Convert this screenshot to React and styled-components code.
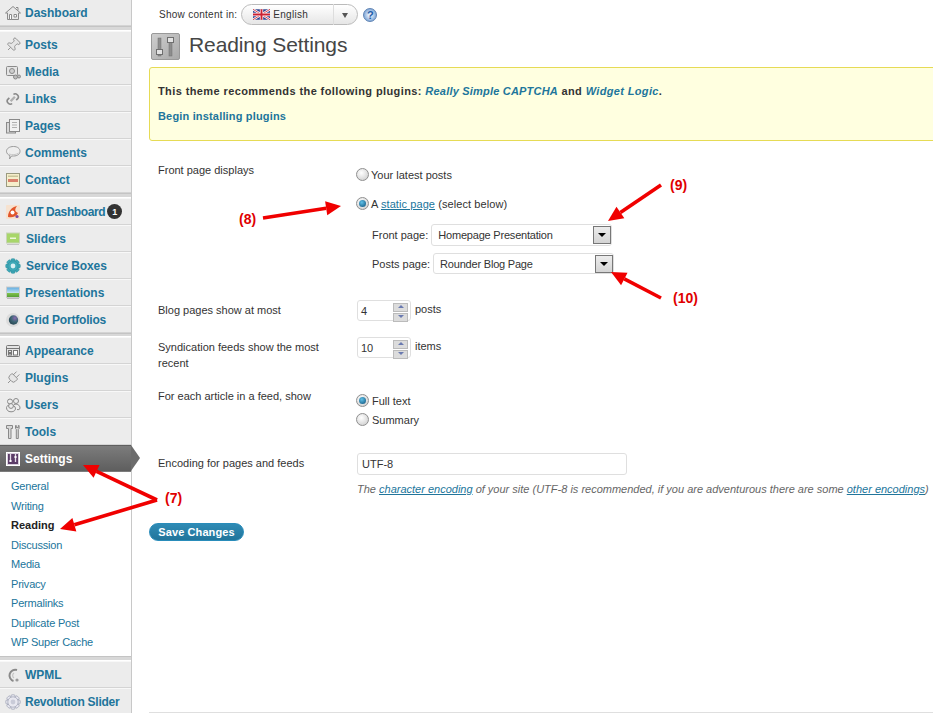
import React from 'react';
import styled, { createGlobalStyle } from 'styled-components';
import { Pin, Plug } from 'lucide-react';

const GlobalStyle = createGlobalStyle`
  html, body { margin: 0; padding: 0; background: #fff; }
  body { font-family: "Liberation Sans", Arial, sans-serif; font-size: 11px; color: #333; }
`;

const HomeIcon = () => (
  <svg width="16" height="16" viewBox="0 0 16 16" fill="#e8e8e8" stroke="#8a8a8a">
    <path d="M0.5 8 L8 1.5 L15.5 8 L13.5 8 V14.5 H2.5 V8Z" />
    <path d="M4.5 9.5h2v5h-2zM9 9.5h2.5v2.5H9z" fill="#fff" />
    <path d="M11 2.5h2v3" fill="none" />
  </svg>
);

const MediaIcon = () => (
  <svg width="16" height="16" viewBox="0 0 16 16" fill="#e4e4e4" stroke="#8a8a8a">
    <rect x="1.5" y="2.5" width="11" height="9" rx="1" />
    <circle cx="7" cy="7" r="2.5" fill="#cfcfcf" />
    <circle cx="10.5" cy="13" r="2" fill="#bdbdbd" />
    <circle cx="14" cy="12.5" r="1.5" fill="#bdbdbd" />
  </svg>
);

const LinksIcon = () => (
  <svg width="17" height="16" viewBox="0 0 17 16" fill="none" stroke="#8a8a8a" strokeWidth="1.8">
    <path d="M9 3.2 a2.6 2.6 0 0 1 3.7 0 l0.8 0.8 a2.6 2.6 0 0 1 0 3.7 l-1.6 1.6" />
    <path d="M7.5 12.8 a2.6 2.6 0 0 1 -3.7 0 l-0.8 -0.8 a2.6 2.6 0 0 1 0 -3.7 l1.6 -1.6" />
    <path d="M6 10.5 L10.5 5.5" strokeWidth="2.4" stroke="#b0b0b0" />
  </svg>
);

const PagesIcon = () => (
  <svg width="16" height="16" viewBox="0 0 16 16" fill="#ececec" stroke="#8a8a8a">
    <rect x="1.5" y="4.5" width="9" height="10.5" fill="#d8d8d8" />
    <rect x="4.5" y="1.5" width="10" height="12" fill="#f2f2f2" />
    <path d="M7 4.5h5M7 7h5M7 9.5h5" stroke="#b0b0b0" />
  </svg>
);

const CommentsIcon = () => (
  <svg width="16" height="16" viewBox="0 0 16 16" fill="#eeeeee" stroke="#9a9a9a">
    <path d="M8.5 1.5 C12.5 1.5 15 3.5 15 6.3 C15 9 12.5 11 8.5 11 L6.5 11 L4.5 14 L5 10.6 C3 9.8 1.5 8.3 1.5 6.3 C1.5 3.5 4.5 1.5 8.5 1.5Z" />
    <path d="M4 9 C7 10 11 10 13.5 8" fill="none" stroke="#c9c9c9" />
  </svg>
);

const ContactIcon = () => (
  <svg width="16" height="16" viewBox="0 0 16 16">
    <rect x="1.5" y="1.5" width="13" height="13" fill="#f5eecb" stroke="#9a9a80" />
    <rect x="3" y="7" width="10" height="3" fill="#d9806c" />
    <rect x="3" y="3.5" width="10" height="1.5" fill="#c9c49a" />
  </svg>
);

const AitIcon = () => (
  <svg width="16" height="16" viewBox="0 0 16 16">
    <rect x="1" y="1" width="14" height="14" rx="1" fill="#f7e2cf" />
    <path d="M3 13 C3 7 7 3 12 2 C10 5 9 7 13 9 C11 13 7 14 3 13Z" fill="#e2562a" />
    <circle cx="7.5" cy="8.5" r="2" fill="#fff" />
    <circle cx="12" cy="12.5" r="1.6" fill="#7a4aa0" />
  </svg>
);

const SlidersIcon = () => (
  <svg width="16" height="16" viewBox="0 0 16 16">
    <rect x="1.5" y="2" width="13" height="10" fill="#a8d66a" stroke="#c8d4b8" />
    <rect x="5" y="6.5" width="6" height="1.5" fill="#eef7dc" />
    <rect x="2" y="13" width="12" height="1" fill="#c4c4c4" />
  </svg>
);

const GearIcon = ({ fill, stroke, hole }) => (
  <svg width="16" height="16" viewBox="0 0 16 16">
    <g fill={fill} stroke={stroke} strokeWidth="0.6">
      {[0, 45, 90, 135].map(angle => (
        <rect key={angle} x="6" y="0.8" width="4" height="14.4" rx="1" transform={`rotate(${angle} 8 8)`} />
      ))}
      <circle cx="8" cy="8" r="5.2" />
    </g>
    <circle cx="8" cy="8" r="2.4" fill={hole} />
  </svg>
);

const PresentationIcon = () => (
  <svg width="16" height="16" viewBox="0 0 16 16">
    <defs>
      <linearGradient id="sky" x1="0" y1="0" x2="0" y2="1">
        <stop offset="0" stopColor="#5aa9e0" />
        <stop offset="0.55" stopColor="#bfe0f0" />
        <stop offset="0.6" stopColor="#7fc04a" />
        <stop offset="1" stopColor="#4f9a35" />
      </linearGradient>
    </defs>
    <rect x="1.5" y="2" width="13" height="10.5" fill="url(#sky)" stroke="#ccc" />
    <rect x="2" y="13" width="12" height="1" fill="#bbb" />
  </svg>
);

const GridIcon = () => (
  <svg width="16" height="16" viewBox="0 0 16 16">
    <defs>
      <radialGradient id="ball" cx="0.65" cy="0.3" r="0.8">
        <stop offset="0" stopColor="#8a6bb0" />
        <stop offset="0.5" stopColor="#3d6674" />
        <stop offset="1" stopColor="#24404c" />
      </radialGradient>
    </defs>
    <circle cx="8" cy="8" r="7" fill="#dcdcdc" />
    <circle cx="8.5" cy="8" r="4.7" fill="url(#ball)" />
  </svg>
);

const AppearanceIcon = () => (
  <svg width="16" height="16" viewBox="0 0 16 16" fill="none" stroke="#777">
    <rect x="1.5" y="2.5" width="13" height="11" rx="1" fill="#e4e4e4" />
    <path d="M1.5 5.5h13" />
    <rect x="3.5" y="7.5" width="3" height="2" />
    <rect x="3.5" y="10.5" width="3" height="1.5" />
    <rect x="8.5" y="7.5" width="4" height="4.5" fill="#fff" />
  </svg>
);

const UsersIcon = () => (
  <svg width="16" height="16" viewBox="0 0 16 16" fill="#ededed" stroke="#8a8a8a">
    <circle cx="5" cy="4.5" r="2.5" />
    <circle cx="11" cy="4" r="2.5" />
    <path d="M9 7.5 C12 6.5 15 8 15 11 C15 12.5 13.5 13 12 12.5" />
    <path d="M1.5 10.5 C1.5 7.5 8.5 7 10 10 C11.5 13 9 14.8 6 14.8 C3 14.8 1.5 13 1.5 10.5Z" />
    <circle cx="6" cy="9" r="2.4" />
  </svg>
);

const ToolsIcon = () => (
  <svg width="16" height="16" viewBox="0 0 16 16" fill="#d8d8d8" stroke="#888">
    <path d="M1.5 1.5h6v3H6v10H3.5v-10h-2z" />
    <path d="M10.5 1.5 v3 l0.8 1 v9 h2 v-9 l0.8 -1 v-3 l-0.8 0 v2 h-2 v-2z" />
  </svg>
);

const SettingsIcon = () => (
  <svg width="14" height="14" viewBox="0 0 14 14">
    <rect x="0.5" y="0.5" width="13" height="13" fill="#d8d0dc" stroke="#fff" />
    <rect x="2" y="2" width="10" height="10" fill="#5c3d68" />
    <path d="M4.5 2v8M9.5 2v8" stroke="#e6dcea" strokeWidth="1.3" />
    <rect x="3.5" y="8" width="2" height="2" fill="#fff" />
    <rect x="8.5" y="4" width="2" height="2" fill="#fff" />
  </svg>
);

const WpmlIcon = () => (
  <svg width="16" height="16" viewBox="0 0 16 16" fill="none">
    <path d="M12 3 A5.6 5.6 0 1 0 8.5 14" stroke="#8a8a8a" strokeWidth="2" />
    <circle cx="12" cy="13" r="1.6" fill="#9a9a9a" />
    <path d="M9 6a3 3 0 0 0 0 5" stroke="#c4c4c4" strokeWidth="1.2" />
  </svg>
);

const TiltedPin = styled(Pin)`
  transform: rotate(45deg);
`;

const TiltedPlug = styled(Plug)`
  transform: rotate(45deg);
`;

const grey = { size: 16, strokeWidth: 1.3, color: '#8a8a8a', fill: '#e6e6e6' };

const groups = [
  [{ name: 'Dashboard', icon: <HomeIcon /> }],
  [
    { name: 'Posts', icon: <TiltedPin {...grey} /> },
    { name: 'Media', icon: <MediaIcon /> },
    { name: 'Links', icon: <LinksIcon /> },
    { name: 'Pages', icon: <PagesIcon /> },
    { name: 'Comments', icon: <CommentsIcon /> },
    { name: 'Contact', icon: <ContactIcon /> },
  ],
  [
    { name: 'AIT Dashboard', icon: <AitIcon />, badge: 1, squeeze: 0.4 },
    { name: 'Sliders', icon: <SlidersIcon />, nudge: true },
    { name: 'Service Boxes', icon: <GearIcon fill="#3fa9b8" stroke="#2b8f9e" hole="#d9f0f3" />, nudge: true, squeeze: 0.1 },
    { name: 'Presentations', icon: <PresentationIcon /> },
    { name: 'Grid Portfolios', icon: <GridIcon />, squeeze: 0.2 },
  ],
  [
    { name: 'Appearance', icon: <AppearanceIcon /> },
    { name: 'Plugins', icon: <TiltedPlug {...grey} /> },
    { name: 'Users', icon: <UsersIcon /> },
    { name: 'Tools', icon: <ToolsIcon /> },
    { name: 'Settings', icon: <SettingsIcon />, current: true },
  ],
];

const subItems = ['General', 'Writing', 'Reading', 'Discussion', 'Media', 'Privacy', 'Permalinks', 'Duplicate Post', 'WP Super Cache'];

const lastGroup = [
  { name: 'WPML', icon: <WpmlIcon /> },
  { name: 'Revolution Slider', icon: <GearIcon fill="#e8e8f0" stroke="#8f93a8" hole="#c9cbd8" />, squeeze: 0.25 },
];

const MenuList = ({ items }) => (
  <Group>
    {items.map(item => (
      <MenuRow key={item.name} $current={item.current}>
        <IconSlot>{item.icon}</IconSlot>
        <MenuLabel $current={item.current} $nudge={item.nudge} $squeeze={item.squeeze}>{item.name}</MenuLabel>
        {item.badge && <Badge>{item.badge}</Badge>}
      </MenuRow>
    ))}
  </Group>
);

const UkFlag = () => (
  <svg width="17" height="11" viewBox="0 0 18 11">
    <rect width="18" height="11" fill="#2a3f8f" />
    <path d="M0 0L18 11M18 0L0 11" stroke="#fff" strokeWidth="2.4" />
    <path d="M0 0L18 11M18 0L0 11" stroke="#cc2233" strokeWidth="0.9" />
    <path d="M9 0V11M0 5.5H18" stroke="#fff" strokeWidth="3.6" />
    <path d="M9 0V11M0 5.5H18" stroke="#cc2233" strokeWidth="2" />
  </svg>
);

const HeadingIcon = () => (
  <svg width="29" height="27" viewBox="0 0 29 27">
    <defs>
      <linearGradient id="tile" x1="0" y1="0" x2="1" y2="1">
        <stop offset="0" stopColor="#cfcfcf" />
        <stop offset="1" stopColor="#a8a8a8" />
      </linearGradient>
    </defs>
    <rect x="0.5" y="0.5" width="28" height="26" rx="1.5" fill="url(#tile)" stroke="#999" />
    <rect x="7" y="5" width="3" height="18" fill="#8d8d8d" stroke="#6f6f6f" strokeWidth="0.5" />
    <rect x="18" y="5" width="3" height="18" fill="#8d8d8d" stroke="#6f6f6f" strokeWidth="0.5" />
    <rect x="5.5" y="16.5" width="6" height="5" fill="#e2e2e2" stroke="#6f6f6f" />
    <rect x="16.5" y="4.5" width="6" height="5" fill="#e2e2e2" stroke="#6f6f6f" />
  </svg>
);

const Radio = ({ checked }) => <RadioDot $checked={checked} />;

const Spinner = ({ value }) => (
  <SpinBox>
    {value}
    <SpinButtons>
      <SpinHalf><SpinUp /></SpinHalf>
      <SpinHalf><SpinDown /></SpinHalf>
    </SpinButtons>
  </SpinBox>
);

const Arrow = ({ x1, y1, x2, y2 }) => {
  const angle = Math.atan2(y2 - y1, x2 - x1);
  const len = 15;
  const wing = 7;
  const bx = x2 - Math.cos(angle) * len;
  const by = y2 - Math.sin(angle) * len;
  const nx = -Math.sin(angle) * wing;
  const ny = Math.cos(angle) * wing;
  return (
    <g>
      <line x1={x1} y1={y1} x2={bx} y2={by} stroke="#f00000" strokeWidth="3.6" />
      <polygon points={`${x2},${y2} ${bx + nx},${by + ny} ${bx - nx},${by - ny}`} fill="#f00000" />
    </g>
  );
};

const App = () => (
  <Page>
    <GlobalStyle />
    <Sidebar>
      <MenuList items={groups[0]} />
      <Separator />
      <MenuList items={groups[1]} />
      <Separator />
      <MenuList items={groups[2]} />
      <Separator $thin />
      <MenuList items={groups[3]} />
      <SubMenu>
        {subItems.map(item => (
          <SubItem key={item} $active={item === 'Reading'}>{item}</SubItem>
        ))}
      </SubMenu>
      <Separator />
      <MenuList items={lastGroup} />
    </Sidebar>

    <Main>
      <LangBar>
        <LangPrompt>Show content in:</LangPrompt>
        <LangSelect>
          <UkFlag />
          <LangName>English</LangName>
          <LangCaret />
        </LangSelect>
        <HelpIcon>?</HelpIcon>
      </LangBar>

      <TitleRow>
        <HeadingIcon />
        <Title>Reading Settings</Title>
      </TitleRow>

      <Notice>
        <NoticeLine $spacing={0.4}>
          This theme recommends the following plugins: <NoticeLink $spacing={0.2}>Really Simple CAPTCHA</NoticeLink> and{' '}
          <NoticeLink $spacing={0.35}>Widget Logic</NoticeLink>.
        </NoticeLine>
        <NoticeLine $spacing={0.17}><InstallLink>Begin installing plugins</InstallLink></NoticeLine>
      </Notice>

      <FormRow $top={19}>
        <RowLabel>Front page displays</RowLabel>
        <FieldStack $pad={5}>
          <Choice $height={29}>
            <Radio />
            <span>Your latest posts</span>
          </Choice>
          <Choice $height={30}>
            <Radio checked />
            <StaticLine>A <TextLink>static page</TextLink> (select below)</StaticLine>
          </Choice>
          <PageSelect $indent={15} $height={22}>
            <SelectLabel>Front page:</SelectLabel>
            <SelectBox>Homepage Presentation<SelectButton /></SelectBox>
          </PageSelect>
          <PageSelect $indent={15} $height={21} $top={7}>
            <SelectLabel>Posts page:</SelectLabel>
            <SelectBox>Rounder Blog Page<SelectButton /></SelectBox>
          </PageSelect>
        </FieldStack>
      </FormRow>

      <FormRow $top={26}>
        <RowLabel>Blog pages show at most</RowLabel>
        <SpinLine>
          <Spinner value="4" />
          <span>posts</span>
        </SpinLine>
      </FormRow>

      <FormRow $top={16}>
        <RowLabel $tight>Syndication feeds show the most recent</RowLabel>
        <SpinLine>
          <Spinner value="10" />
          <span>items</span>
        </SpinLine>
      </FormRow>

      <FormRow $top={15}>
        <RowLabel>For each article in a feed, show</RowLabel>
        <FieldStack $pad={5}>
          <Choice $height={19} $gap={3}><Radio checked /><span>Full text</span></Choice>
          <Choice $height={19} $gap={3}><Radio /><span>Summary</span></Choice>
        </FieldStack>
      </FormRow>

      <FormRow $top={24}>
        <RowLabel>Encoding for pages and feeds</RowLabel>
        <div>
          <EncodingInput>UTF-8</EncodingInput>
          <Description>
            The <TextLink>character encoding</TextLink> of your site (UTF-8 is recommended, if you are adventurous there are some <TextLink>other encodings</TextLink>)
          </Description>
        </div>
      </FormRow>

      <SaveButton>Save Changes</SaveButton>
      <FooterLine />
    </Main>

    <Annotations width="933" height="713" viewBox="0 0 933 713">
      <Arrow x1={263} y1={218} x2={341} y2={206} />
      <Arrow x1={661} y1={185} x2={608} y2={221} />
      <Arrow x1={661} y1={298} x2={611} y2={272} />
      <Arrow x1={157} y1={500} x2={83} y2={465} />
      <Arrow x1={157} y1={500} x2={60} y2={529} />
    </Annotations>
    <Callout $x={239} $y={211}>(8)</Callout>
    <Callout $x={670} $y={177}>(9)</Callout>
    <Callout $x={673} $y={290}>(10)</Callout>
    <Callout $x={165} $y={490}>(7)</Callout>
  </Page>
);

const Page = styled.div`
  position: relative;
  display: flex;
  width: 933px;
  height: 713px;
  overflow: hidden;
  background: #fff;
`;

const Sidebar = styled.nav`
  flex: 0 0 132px;
  width: 132px;
  height: 730px;
  box-sizing: border-box;
  margin-top: -1px;
  border-right: 1px solid #c8c8c8;
  background: #fff;
`;

const Group = styled.div`
  background: #ececec;
`;

const Separator = styled.div`
  height: ${p => (p.$thin ? '4px' : '5px')};
  box-sizing: border-box;
  background: #d8d8d8;
  border-top: 1px solid #c4c4c4;
  border-bottom: 1px solid #fff;
`;

const MenuRow = styled.div`
  position: relative;
  display: flex;
  align-items: center;
  height: 27px;
  box-sizing: border-box;
  padding-left: 5px;
  border-bottom: 1px solid ${p => (p.$current ? 'transparent' : '#d4d4d4')};
  border-top: 1px solid ${p => (p.$current ? 'transparent' : '#f8f8f8')};
  background: ${p => (p.$current ? 'linear-gradient(#7c7c7c, #5e5e5e)' : 'transparent')};

  ${p =>
    p.$current &&
    `&::after {
      content: '';
      position: absolute;
      top: -1px;
      left: 131px;
      border-style: solid;
      border-width: 13.5px 0 13.5px 9px;
      border-color: transparent transparent transparent #6c6c6c;
    }`}
`;

const IconSlot = styled.span`
  display: flex;
  align-items: center;
  justify-content: center;
  width: 16px;
  height: 16px;
  margin-right: 4px;
`;

const MenuLabel = styled.span`
  margin-left: ${p => (p.$nudge ? '1px' : '0')};
  font-size: 12px;
  font-weight: bold;
  letter-spacing: ${p => (p.$squeeze ? -p.$squeeze : 0)}px;
  color: ${p => (p.$current ? '#fff' : '#21759b')};
  white-space: nowrap;
`;

const Badge = styled.span`
  display: flex;
  align-items: center;
  justify-content: center;
  width: 15px;
  height: 15px;
  margin-left: 2px;
  border-radius: 50%;
  background: #333;
  color: #fff;
  font-size: 9px;
  font-weight: bold;
`;

const SubMenu = styled.div`
  padding: 5px 0 3.5px 11px;
  background: #fff;
`;

const SubItem = styled.div`
  height: 19.5px;
  line-height: 19.5px;
  letter-spacing: ${p => (p.$active ? '0' : '-0.2px')};
  color: ${p => (p.$active ? '#222' : '#21759b')};
  font-weight: ${p => (p.$active ? 'bold' : 'normal')};
  white-space: nowrap;
`;

const Main = styled.main`
  position: relative;
  flex: 1;
  min-width: 0;
  padding-left: 17px;
`;

const LangBar = styled.div`
  display: flex;
  align-items: center;
  height: 21px;
  margin-top: 4px;
  padding-left: 10px;
  font-size: 10px;
`;

const LangPrompt = styled.span`
  letter-spacing: 0.27px;
`;

const LangSelect = styled.div`
  position: relative;
  display: flex;
  align-items: center;
  width: 117px;
  height: 21px;
  box-sizing: border-box;
  margin-left: 4px;
  padding-left: 11px;
  border: 1px solid #bbb;
  border-radius: 11px;
  background: linear-gradient(#fff, #e6e6e6);
`;

const LangName = styled.span`
  margin-left: 3px;
  font-size: 10px;
  letter-spacing: 0.3px;
`;

const LangCaret = styled.span`
  position: absolute;
  top: -1px;
  right: 0;
  width: 23px;
  height: 21px;
  border-left: 1px solid #ddd;

  &::after {
    content: '';
    position: absolute;
    top: 9px;
    left: 8px;
    border-style: solid;
    border-width: 5px 3px 0;
    border-color: #555 transparent transparent;
  }
`;

const HelpIcon = styled.span`
  display: flex;
  align-items: center;
  justify-content: center;
  width: 14px;
  height: 14px;
  margin-left: 5px;
  border-radius: 50%;
  border: 1px solid #5f83b3;
  box-sizing: border-box;
  background: radial-gradient(circle at 50% 50%, #dfeaf8 20%, #4f86c8 100%);
  color: #1f5ca8;
  font-size: 11px;
  font-weight: bold;
`;

const TitleRow = styled.div`
  display: flex;
  align-items: center;
  gap: 9px;
  height: 27px;
  margin: 8px 0 7px 2px;
`;

const Title = styled.h2`
  margin: 0;
  padding-bottom: 4px;
  font-size: 21px;
  font-weight: normal;
  letter-spacing: -0.1px;
  color: #464646;
  white-space: nowrap;
`;

const Notice = styled.div`
  height: 74px;
  box-sizing: border-box;
  margin-right: -10px;
  padding: 15px 8px 0;
  border: 1px solid #e6db55;
  border-radius: 3px;
  background: #ffffe0;
`;

const NoticeLine = styled.p`
  margin: 0 0 9px;
  height: 16px;
  line-height: 16px;
  font-weight: bold;
  letter-spacing: ${p => p.$spacing}px;
  white-space: nowrap;
  color: #333;
`;

const NoticeLink = styled.em`
  letter-spacing: ${p => p.$spacing}px;
  color: #21759b;
`;

const InstallLink = styled.span`
  color: #21759b;
`;

const FormRow = styled.div`
  display: grid;
  grid-template-columns: 199px 1fr;
  margin-top: ${p => p.$top}px;
  padding-left: 9px;
`;

const RowLabel = styled.div`
  width: 180px;
  line-height: ${p => (p.$tight ? '16px' : '20px')};
  padding-top: ${p => (p.$tight ? '2px' : '0')};
`;

const FieldStack = styled.div`
  padding-top: ${p => p.$pad}px;
`;

const Choice = styled.label`
  display: flex;
  align-items: flex-start;
  gap: ${p => p.$gap || 2}px;
  height: ${p => p.$height}px;
  line-height: 20px;
`;

const StaticLine = styled.span`
  letter-spacing: 0.08px;
`;

const RadioDot = styled.span`
  position: relative;
  display: block;
  flex: none;
  width: 13px;
  height: 13px;
  box-sizing: border-box;
  margin: 3px 0 0 -1px;
  border: 1px solid #8f8f8f;
  border-radius: 50%;
  background: radial-gradient(circle at 40% 35%, #fff, #c8c8c8);

  ${p =>
    p.$checked &&
    `&::after {
      content: '';
      position: absolute;
      top: 2px;
      left: 2px;
      width: 7px;
      height: 7px;
      border-radius: 50%;
      background: radial-gradient(circle at 40% 35%, #5fc0e8, #0b4f78);
    }`}
`;

const TextLink = styled.span`
  color: #21759b;
  text-decoration: underline;
`;

const PageSelect = styled.div`
  display: flex;
  align-items: center;
  height: ${p => p.$height}px;
  margin: ${p => p.$top || 0}px 0 0 ${p => p.$indent}px;
`;

const SelectLabel = styled.span`
  margin-right: 3px;
`;

const SelectBox = styled.div`
  position: relative;
  width: 181px;
  height: 100%;
  box-sizing: border-box;
  padding-left: 6px;
  border: 1px solid #dfdfdf;
  border-radius: 3px;
  line-height: 20px;
  letter-spacing: -0.2px;
`;

const SelectButton = styled.span`
  position: absolute;
  top: 1px;
  right: 0;
  width: 18px;
  height: 18px;
  box-sizing: border-box;
  border: 1px solid #777;
  background: linear-gradient(#ececec, #d4d4d4);

  &::after {
    content: '';
    position: absolute;
    top: 6px;
    left: 4px;
    border-style: solid;
    border-width: 4px 4px 0;
    border-color: #000 transparent transparent;
  }
`;

const SpinLine = styled.div`
  display: flex;
  gap: 4px;
  line-height: 18px;
`;

const SpinBox = styled.div`
  position: relative;
  width: 54px;
  height: 21px;
  box-sizing: border-box;
  padding-left: 3px;
  border: 1px solid #dfdfdf;
  border-radius: 3px;
  line-height: 21px;
`;

const SpinButtons = styled.div`
  position: absolute;
  top: 2px;
  right: 2px;
  display: flex;
  flex-direction: column;
  gap: 1px;
  width: 15px;
`;

const SpinHalf = styled.span`
  position: relative;
  display: block;
  height: 7px;
  background: #dcdcdc;
  border: 1px solid #bbb;
`;

const SpinUp = styled.span`
  position: absolute;
  top: 1px;
  left: 4px;
  border-style: solid;
  border-width: 0 3px 3px;
  border-color: transparent transparent #6a7ab0;
`;

const SpinDown = styled(SpinUp)`
  border-width: 3px 3px 0;
  border-color: #6a7ab0 transparent transparent;
`;

const EncodingInput = styled.div`
  width: 270px;
  height: 22px;
  box-sizing: border-box;
  padding-left: 4px;
  border: 1px solid #dfdfdf;
  border-radius: 3px;
  line-height: 20px;
`;

const Description = styled.p`
  margin: 6px 0 0;
  line-height: 16px;
  font-style: italic;
  color: #666;
  white-space: nowrap;
`;

const SaveButton = styled.button`
  display: block;
  width: 95px;
  height: 18px;
  margin-top: 26px;
  padding: 0;
  border: 1px solid #298cba;
  border-radius: 11px;
  background: linear-gradient(#2f8bb5, #21759b);
  color: #fff;
  font-family: inherit;
  font-size: 11px;
  font-weight: bold;
  letter-spacing: 0.1px;
`;

const FooterLine = styled.div`
  position: absolute;
  left: 17px;
  right: 0;
  bottom: 0;
  border-top: 1px solid #dfdfdf;
`;

const Annotations = styled.svg`
  position: absolute;
  top: 0;
  left: 0;
  pointer-events: none;
`;

const Callout = styled.span`
  position: absolute;
  left: ${p => p.$x}px;
  top: ${p => p.$y}px;
  font-size: 14px;
  font-weight: bold;
  line-height: 16px;
  color: #e00000;
`;

export default App;
